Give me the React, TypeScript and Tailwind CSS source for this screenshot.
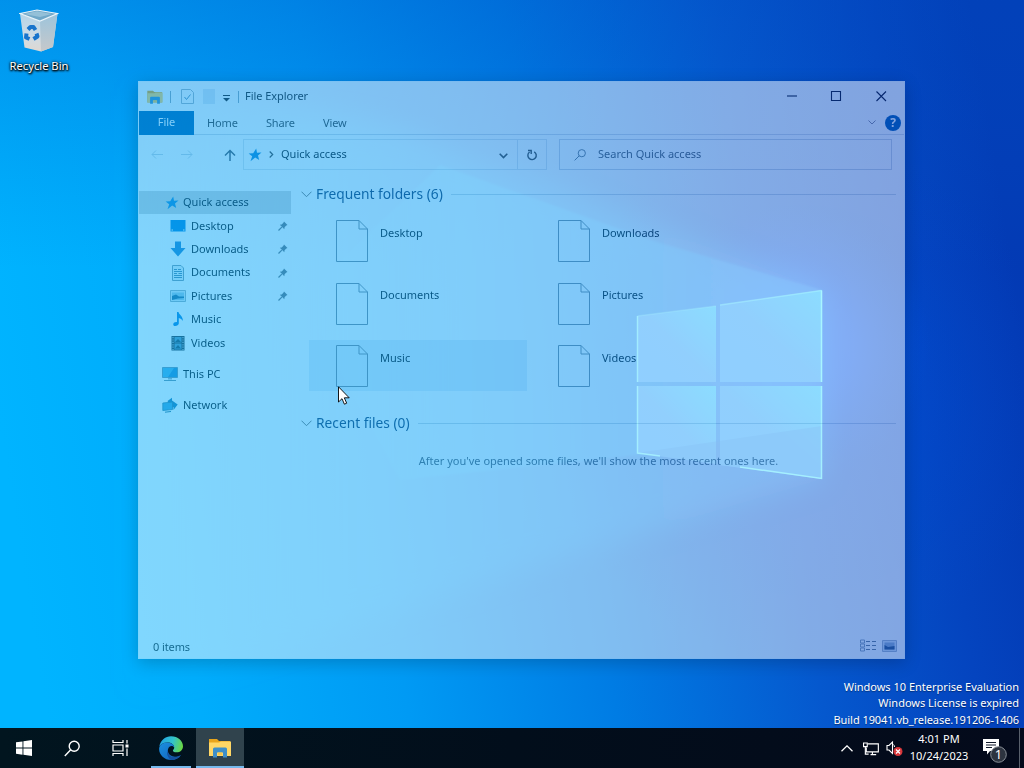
import React from "react";

const Wallpaper = () => (
  <svg className="absolute inset-0 h-[768px] w-[1024px]" viewBox="0 0 1024 768" preserveAspectRatio="none">
    <defs>
      <linearGradient id="base" x1="0" y1="0.56" x2="1" y2="0.44">
        <stop offset="0" stopColor="#00b4ff" />
        <stop offset="0.15" stopColor="#00adfc" />
        <stop offset="0.35" stopColor="#009af4" />
        <stop offset="0.55" stopColor="#007ce4" />
        <stop offset="0.75" stopColor="#0558ce" />
        <stop offset="0.9" stopColor="#0444bf" />
        <stop offset="1" stopColor="#033ab4" />
      </linearGradient>
      <linearGradient id="topShade" x1="0" y1="0" x2="0" y2="1">
        <stop offset="0" stopColor="#0050c4" stopOpacity="0.32" />
        <stop offset="0.35" stopColor="#0060d0" stopOpacity="0" />
      </linearGradient>
      <linearGradient id="beam" x1="0" y1="0" x2="1" y2="0">
        <stop offset="0" stopColor="#00b4ff" stopOpacity="0" />
        <stop offset="0.3" stopColor="#00aeff" stopOpacity="0.7" />
        <stop offset="1" stopColor="#0c94ff" stopOpacity="0.85" />
      </linearGradient>
      <radialGradient id="glow" gradientUnits="userSpaceOnUse" cx="790" cy="345" r="140">
        <stop offset="0" stopColor="#0a68ff" stopOpacity="0.95" />
        <stop offset="0.45" stopColor="#0660ff" stopOpacity="0.55" />
        <stop offset="1" stopColor="#0456e0" stopOpacity="0" />
      </radialGradient>
      <radialGradient id="rightGlow" gradientUnits="userSpaceOnUse" cx="800" cy="400" r="260">
        <stop offset="0" stopColor="#0055e6" stopOpacity="0.5" />
        <stop offset="1" stopColor="#0048d0" stopOpacity="0" />
      </radialGradient>
      <linearGradient id="pane" x1="0" y1="1" x2="1" y2="0">
        <stop offset="0" stopColor="#20a0ff" />
        <stop offset="0.5" stopColor="#22a0fc" />
        <stop offset="1" stopColor="#18baff" />
      </linearGradient>
      <filter id="soft" x="-20%" y="-20%" width="140%" height="140%">
        <feGaussianBlur stdDeviation="14" />
      </filter>
      <filter id="fine">
        <feGaussianBlur stdDeviation="1.2" />
      </filter>
    </defs>
    <rect width="1024" height="768" fill="url(#base)" />
    <rect width="1024" height="768" fill="url(#topShade)" />
    <rect width="1024" height="768" fill="url(#rightGlow)" />
    <rect width="1024" height="768" fill="url(#glow)" />
    <path d="M822 290 L400 130 L120 80 L120 700 L520 570 L822 479Z" fill="url(#beam)" opacity="0.5" filter="url(#soft)" />
    <path d="M822 290 L660 243 L440 165 L300 300 L400 480 L637 455 L822 425Z" fill="url(#beam)" opacity="0.45" filter="url(#fine)" />
    <g fill="url(#pane)">
      <path d="M637 316 L716 306 V382 H637Z" />
      <path d="M720 305 L822 290 V382 H720Z" />
      <path d="M637 386 H716 V464 L637 453Z" />
      <path d="M720 386 H822 V479 L720 465Z" />
    </g>
    <path d="M637 453 L822 426 V479Z" fill="#1488ee" opacity="0.45" />
    <g fill="none" stroke="#52ecff" strokeWidth="1.500">
      <path d="M637.500 382 V316" opacity="0.75" />
      <path d="M637.500 316 L716 306" opacity="0.25" />
      <path d="M720 305 L821.500 290.500" opacity="0.5" />
      <path d="M821.500 290.500 V382" />
      <path d="M637.500 386 V453 L660 456" opacity="0.8" />
      <path d="M821.500 386 V478.500 L740 467" opacity="0.85" />
    </g>
  </svg>
);

const Pin = () => (
  <svg className="h-[10px] w-[10px]" viewBox="0 0 10 10">
    <path d="M6 0.500 L9.500 4 L8.300 4.600 L6.600 6.300 L6.300 8.200 L1.800 3.700 L3.700 3.400 L5.400 1.700Z" fill="#6c7680" />
    <path d="M3.800 6.200 L0.500 9.500" stroke="#6c7680" strokeWidth="1.200" />
  </svg>
);

const Star = () => (
  <svg className="h-[14px] w-[14px]" viewBox="0 0 14 14">
    <path d="M8.200 0.500 L9 4.700 L13.500 4.600 L10 7.400 L11.200 12 L7.200 9.400 L2.500 13.200 L4.200 8.300 L0.600 5.400 L5.200 5.200Z" fill="#1a8ad6" />
  </svg>
);

const DesktopIcon = () => (
  <svg className="h-4 w-4" viewBox="0 0 16 16">
    <path d="M0.500 2 H15.500 V13.500 H0.500Z" fill="#0a86dc" />
    <path d="M1.500 12 H3 M13 12 H14.500" stroke="#fff" strokeWidth="1" />
  </svg>
);
const DownloadIcon = () => (
  <svg className="h-4 w-4" viewBox="0 0 16 16">
    <path d="M5 0.500 H11 V7 H15.500 L8 15.500 L0.500 7 H5Z" fill="#2a86cf" />
  </svg>
);
const DocumentIcon = () => (
  <svg className="h-4 w-4" viewBox="0 0 16 16" fill="none" stroke="#7f9aac">
    <path d="M2.500 0.500 H11 L13.500 3 V15.500 H2.500Z" fill="#e8f2f8" />
    <path d="M4 4.500 H7 M8 4.500 H11 M4 6.500 H12 M4 8.500 H7 M8.500 8.500 H12 M4 10.500 H12 M4 12.500 H12" stroke="#5488a8" />
  </svg>
);
const PictureIcon = () => (
  <svg className="h-4 w-4" viewBox="0 0 16 16">
    <path d="M0.500 2.500 H15.500 V13.500 H0.500Z" fill="#dceaf2" stroke="#98aebb" />
    <path d="M2 4.500 H14 V12 H2Z" fill="#9cc8e0" />
    <path d="M2 12 V8 L6 6.500 L9 8.500 H14 V10 L8 10.500 L2 12Z" fill="#2b6c96" />
  </svg>
);
const MusicIcon = () => (
  <svg className="h-4 w-4" viewBox="0 0 16 16">
    <path d="M7 1 H8.500 C9 4 13.300 5 12.800 10 C12 8.500 10.500 7.300 8.800 7 V12.500 C8.600 14 7 15 5.300 15 C3.800 15 3 14 3.300 12.900 C3.700 11.500 5.500 10.700 7 11.200Z" fill="#1285dc" />
  </svg>
);
const VideoIcon = () => (
  <svg className="h-4 w-4" viewBox="0 0 16 16">
    <path d="M1.500 1 H14.500 V15.500 H1.500Z" fill="#2d3b46" />
    <path d="M4.500 2 H11.500 V7.500 H4.500Z M4.500 8.500 H11.500 V14.500 H4.500Z" fill="#5d98b8" />
    <path d="M3 2 V15 M13 2 V15" stroke="#a8c0cc" strokeWidth="1.200" strokeDasharray="1.200 1.200" />
    <path d="M5 7 L8 4 L11 7Z M5 13.500 L8 10 L11 13.500Z" fill="#264c60" />
  </svg>
);
const PcIcon = () => (
  <svg className="h-4 w-4" viewBox="0 0 16 16">
    <path d="M0.500 1.500 H15.500 V11.500 H0.500Z" fill="#2b8fce" stroke="#6c94ae" />
    <path d="M1 2 H12 L6 11 H1Z" fill="#4fb0e2" />
    <path d="M6 12 H10 V13.500 H6Z" fill="#9ab4c4" />
    <path d="M2 14.500 H14" stroke="#6c94a8" />
  </svg>
);
const NetworkIcon = () => (
  <svg className="h-4 w-4" viewBox="0 0 16 16">
    <path d="M5.500 4 L10 0.800 V3.500 L15.700 7.500 L11.500 13 V10 L9 11Z" fill="#267fb4" />
    <path d="M0.800 6 L10.500 5 V12.500 L0.800 13.500Z" fill="#46a8da" stroke="#3a7ca0" strokeWidth="0.800" />
    <path d="M3 15.200 L9 14.500" stroke="#3a7898" />
  </svg>
);

const FolderIcon = ({ className }: { className: string }) => (
  <svg className={className} viewBox="0 0 22 20">
    <path d="M0 1 H8 L10 3 H21 V18 H0Z" fill="#e8a51c" />
    <path d="M0 4.500 H10 L12 3.500 H22 V18 H0Z" fill="#ffd766" />
    <path d="M4 11 Q4 9.500 5.500 9.500 H16.500 Q18 9.500 18 11 V19.500 H14 V14.500 H8 V19.500 H4Z" fill="#3e8fc8" />
    <path d="M9 14.500 H13 V17 H9Z" fill="#fbc84a" />
  </svg>
);

const Sheet = () => (
  <svg className="h-[43px] w-[33px]" viewBox="0 0 33 43" fill="none" stroke="#7c8a98" strokeWidth="1">
    <path d="M0.500 0.500 H23 L31.500 9 V41.500 H0.500Z" />
    <path d="M23 0.500 V9 H31.500" />
  </svg>
);

const nav = [
  { name: "Desktop", icon: <DesktopIcon />, pinned: true },
  { name: "Downloads", icon: <DownloadIcon />, pinned: true },
  { name: "Documents", icon: <DocumentIcon />, pinned: true },
  { name: "Pictures", icon: <PictureIcon />, pinned: true },
  { name: "Music", icon: <MusicIcon />, pinned: false },
  { name: "Videos", icon: <VideoIcon />, pinned: false },
];

const folders = ["Desktop", "Downloads", "Documents", "Pictures", "Music", "Videos"];

const GroupHeading = ({ label }: { label: string }) => (
  <div className="flex h-5 items-center">
    <svg className="h-[7px] w-[11px]" viewBox="0 0 11 7" fill="none" stroke="#777">
      <path d="M0.500 0.700 L5.500 5.700 L10.500 0.700" />
    </svg>
    <span className="ml-1 text-[13.750px] leading-5 text-[#1c3c68]">{label}</span>
    <span className="ml-2 h-px grow bg-[#d0d9e3]" />
  </div>
);

const Explorer = () => (
  <div className="absolute left-[138px] top-[81px] flex h-[578px] w-[767px] flex-col border border-[#f4fbff] bg-white text-[#0c1218] opacity-50 shadow-[0_4px_16px_rgba(0,0,0,0.4)]">
    <div className="flex h-[29px] shrink-0 items-center">
      <FolderIcon className="ml-2 h-[14px] w-4" />
      <span className="ml-[7px] h-3 w-px bg-[#90a8b8]" />
      <svg className="ml-[10px] h-[15px] w-[13px]" viewBox="0 0 13 15" fill="none" stroke="#a3b5c2">
        <path d="M0.500 0.500 H9.500 L12.500 3.500 V14.500 H0.500Z" />
        <path d="M3.500 8 L5.500 10.500 L9.500 5.500" stroke="#5c8fb8" />
      </svg>
      <span className="ml-[9px] h-[15px] w-3 bg-[#e2eaf4]" />
      <svg className="ml-[7px] mt-[3px] h-[7px] w-[9px]" viewBox="0 0 9 7">
        <path d="M1 0.500 H8" stroke="#222" />
        <path d="M1 3 H8 L4.500 6.500Z" fill="#222" />
      </svg>
      <span className="ml-[7px] h-3 w-px bg-[#90a8b8]" />
      <span className="ml-[6px] text-[11px] tracking-[-0.05px] text-[#222]">File Explorer</span>
      <svg className="ml-auto mr-[17px] h-[11px] w-[100px]" viewBox="0 0 100 11" fill="none" stroke="#0a0a20" strokeWidth="1.100">
        <path d="M0 5 H10" />
        <path d="M44.500 0.500 H53.500 V9.500 H44.500Z" />
        <path d="M89.500 0.500 L99 10 M99 0.500 L89.500 10" />
      </svg>
    </div>
    <div className="flex h-6 shrink-0 items-center border-b border-[#d4dbe6] text-[11px] text-[#3c3c3c]">
      <span className="flex h-6 w-[55px] items-center justify-center bg-[#0066b4] text-white">File</span>
      <span className="ml-[13px] mt-px tracking-[-0.1px]">Home</span>
      <span className="ml-[28px] mt-px tracking-[-0.1px]">Share</span>
      <span className="ml-[28px] mt-px tracking-[-0.1px]">View</span>
      <svg className="ml-auto h-[5px] w-2" viewBox="0 0 8 5" fill="none" stroke="#889">
        <path d="M0.500 0.500 L4 4 L7.500 0.500" />
      </svg>
      <span className="ml-[9px] mr-[3px] flex h-4 w-4 items-center justify-center rounded-full bg-[#0058ae] text-[12px] font-bold text-white">?</span>
    </div>
    <div className="mt-1 flex h-[31px] shrink-0 items-center">
      <svg className="ml-3 h-3 w-[90px]" viewBox="0 0 90 12" fill="none" stroke="#c8d6e2">
        <path d="M12 5.500 H1 M5 1.500 L1 5.500 L5 9.500 M30 5.500 H41 M37 1.500 L41 5.500 L37 9.500" />
        <path d="M79 12 V1.500 M74 6.500 L79 1.500 L84 6.500" stroke="#4c5a68" strokeWidth="1.500" />
      </svg>
      <div className="ml-[2px] flex h-[31px] w-[275px] items-center border border-[#dbe4ec]">
        <span className="ml-1"><Star /></span>
        <svg className="ml-[7px] h-[7px] w-[5px]" viewBox="0 0 5 7" fill="none" stroke="#444" strokeWidth="1.200">
          <path d="M0.700 0.500 L3.700 3.500 L0.700 6.500" />
        </svg>
        <span className="ml-[7px] text-[11px]">Quick access</span>
        <svg className="ml-auto mr-[9px] mt-[2px] h-[6px] w-[9px]" viewBox="0 0 9 6" fill="none" stroke="#444" strokeWidth="1.600">
          <path d="M0.700 0.700 L4.500 4.500 L8.300 0.700" />
        </svg>
      </div>
      <div className="flex h-[31px] w-[29px] items-center justify-center border border-l-0 border-[#dbe4ec]">
        <svg className="h-3 w-3" viewBox="0 0 12 12" fill="none" stroke="#444" strokeWidth="1.400">
          <path d="M8.200 2.800 A4.200 4.200 0 1 1 3.600 3" />
          <path d="M2 1.500 H5.200 V5" />
        </svg>
      </div>
      <div className="ml-[12px] flex h-[31px] w-[333px] items-center border border-[#ccd5e2]">
        <svg className="ml-[14px] h-3 w-3" viewBox="0 0 12 12" fill="none" stroke="#687888">
          <circle cx="7.800" cy="4.200" r="3.600" />
          <path d="M5.200 6.800 L0.600 11.400" />
        </svg>
        <span className="ml-3 text-[11px] text-[#4c5560]">Search Quick access</span>
      </div>
    </div>
    <div className="flex grow">
      <div className="flex w-[162px] flex-col pt-[21px] text-[11px]">
        <div className="flex h-[23.200px] w-[152px] items-center bg-[#d4d6d9] pl-[26px]">
          <Star />
          <span className="ml-1">Quick access</span>
        </div>
        {nav.map((n) => (
          <div key={n.name} className="flex h-[23.400px] w-[152px] items-center pl-[31px] pr-[3px]">
            {n.icon}
            <span className="ml-[5px] grow">{n.name}</span>
            {n.pinned && <Pin />}
          </div>
        ))}
        <div className="mt-2 flex h-[23.400px] items-center pl-[23px]">
          <PcIcon />
          <span className="ml-[5px]">This PC</span>
        </div>
        <div className="mt-[7.500px] flex h-[23.400px] items-center pl-[23px]">
          <NetworkIcon />
          <span className="ml-[5px]">Network</span>
        </div>
      </div>
      <div className="flex grow flex-col pr-2 pt-[14px]">
        <GroupHeading label="Frequent folders (6)" />
        <div className="ml-2 mt-[11px] grid grid-cols-[218px_218px] gap-x-[4px] gap-y-[11.500px]">
          {folders.map((f) => (
            <div
              key={f}
              className={f === "Music" ? "flex h-[51px] items-start bg-[#e6f0f9] pl-[27px] pt-[5px]" : "flex h-[51px] items-start pl-[27px] pt-[5px]"}
            >
              <Sheet />
              <span className="ml-[11px] mt-[4.500px] text-[11px] leading-4">{f}</span>
            </div>
          ))}
        </div>
        <div className="mt-[22px]">
          <GroupHeading label="Recent files (0)" />
        </div>
        <p className="mt-5 text-center text-[11px] leading-4 text-[#5c6470]">After you've opened some files, we'll show the most recent ones here.</p>
      </div>
    </div>
    <div className="flex h-[23px] shrink-0 items-center pl-[14px] pr-[7px] text-[11px] text-[#2a2a2a]">
      <span className="mt-px grow tracking-[-0.1px]">0 items</span>
      <svg className="mb-[2px] h-[13px] w-4" viewBox="0 0 16 13" fill="none" stroke="#8c9cb0">
        <path d="M0.500 1 H4.500 V4 H0.500Z M0.500 5 H4.500 V8 H0.500Z M0.500 9 H4.500 V12 H0.500Z" />
        <path d="M6 2.500 H10 M12 2.500 H16 M6 6.500 H10 M12 6.500 H16 M6 10.500 H10 M12 10.500 H16" stroke="#68788c" />
      </svg>
      <svg className="mb-[2px] ml-[6px] h-3 w-[15px]" viewBox="0 0 15 12">
        <path d="M0.500 0.500 H14.500 V11.500 H0.500Z" fill="#d4deec" stroke="#a4b2c6" />
        <path d="M2.500 2.500 H12.500 V9.500 H2.500Z" fill="#90a8c8" />
        <path d="M2.500 9.500 V5 L6 7 L12.500 6 V9.500Z" fill="#30507c" />
      </svg>
    </div>
  </div>
);

const RecycleBin = () => (
  <div className="absolute left-[1px] top-[8px] flex w-[76px] flex-col items-center">
    <svg className="h-[46px] w-10" viewBox="0 0 40 46">
      <defs>
        <linearGradient id="bin" x1="0" y1="0" x2="0" y2="1">
          <stop offset="0" stopColor="#b4d4e8" />
          <stop offset="0.600" stopColor="#cfdce5" />
          <stop offset="1" stopColor="#ded8d2" />
        </linearGradient>
        <linearGradient id="binSide" x1="0" y1="0" x2="0" y2="1">
          <stop offset="0" stopColor="#9cc4dc" />
          <stop offset="1" stopColor="#c6c8ca" />
        </linearGradient>
      </defs>
      <path d="M1 5.500 L21 13 L38.500 5.500 L34 39 L22 43.500 L5.500 39.500Z" fill="url(#bin)" />
      <path d="M21 13 L38.500 5.500 L34 39 L22 43.500Z" fill="url(#binSide)" />
      <path d="M1 5.500 L18 2 L38.500 5.500 L21 13Z" fill="#6fa7c8" stroke="#eaf4fa" strokeWidth="1.200" />
      <path d="M5 6 L18 3.300 L33 6 L21 9Z" fill="#94c0d8" />
      <g fill="none" stroke="#1874cc" strokeWidth="4" strokeLinejoin="round">
        <path d="M9 21.500 L11.500 19 H14.500 L16.500 22" />
        <path d="M17.500 25.500 L18.500 28.500 L14.500 31" />
        <path d="M10.500 31 L7 29.500 L7.500 25.500" />
      </g>
    </svg>
    <span className="mt-1 text-[11.200px] leading-4 text-white [text-shadow:0_1px_2px_#000,1px_1px_2px_#000,0_0_3px_#000]">Recycle Bin</span>
  </div>
);

const Taskbar = () => (
  <div className="absolute bottom-0 left-0 flex h-10 w-[1024px] items-stretch bg-linear-to-r from-[#01151f] via-[#020e1b] to-[#040a1b] text-white">
    <div className="flex w-12 items-center justify-center">
      <svg className="h-4 w-4" viewBox="0 0 16 16" fill="#fff">
        <path d="M0 2.300 L6.500 1.400 V7.600 H0Z M7.400 1.300 L16 0 V7.600 H7.400Z M0 8.500 H6.500 V14.700 L0 13.800Z M7.400 8.500 H16 V16 L7.400 14.800Z" />
      </svg>
    </div>
    <div className="flex w-12 items-center justify-center">
      <svg className="h-[17px] w-[17px]" viewBox="0 0 17 17" fill="none" stroke="#fff" strokeWidth="1.400">
        <circle cx="10.200" cy="6.200" r="5" />
        <path d="M6.700 9.700 L0.800 16" />
      </svg>
    </div>
    <div className="flex w-12 items-center justify-center">
      <svg className="h-4 w-[17px]" viewBox="0 0 17 16" fill="none" stroke="#fff" strokeWidth="1.200">
        <path d="M1 0 V2.500 H11 V0 M1 5 H11 V11 H1Z M1 16 V13.500 H11 V16 M15 0 V3.500 M15 8.500 V16" />
        <path d="M13.500 4.500 H16.500 V7.500 H13.500Z" fill="#fff" stroke="none" />
      </svg>
    </div>
    <div className="ml-[7px] flex w-10 flex-col items-center">
      <svg className="mt-2 h-6 w-6" viewBox="0 0 24 24">
        <defs>
          <linearGradient id="edgeTop" x1="0" y1="0.300" x2="1" y2="0.500">
            <stop offset="0" stopColor="#1fa0e4" />
            <stop offset="0.550" stopColor="#32c4cc" />
            <stop offset="1" stopColor="#6ad844" />
          </linearGradient>
          <linearGradient id="edgeLow" x1="0" y1="0" x2="1" y2="1">
            <stop offset="0" stopColor="#1b8fe0" />
            <stop offset="1" stopColor="#1160b8" />
          </linearGradient>
        </defs>
        <path d="M0.300 10.500 C1.500 4 6.500 0.200 12 0.200 C19 0.200 24 5 24 10.200 C24 14 21 16.300 17.700 16.300 C14.800 16.300 13.700 15.300 13.900 14.500 C14.300 13.600 15.200 13.200 15.200 11.600 C15.200 8.600 12.200 6.500 8.500 6.500 C4.500 6.500 1.500 8.400 0.300 10.500Z" fill="url(#edgeTop)" />
        <path d="M0.100 13 C0.100 9 4 6.600 8.200 6.600 C12.500 6.600 15.200 9 15.200 11.600 C14.500 10 12.500 9.500 10.800 10.500 C7.500 12.500 8 20.500 16 20.800 C18.500 20.900 20.500 20 22 19 C20 22.200 16.200 24 12 24 C5.500 24 0.100 19 0.100 13Z" fill="url(#edgeLow)" />
        <path d="M8.500 13 C7.800 18 11.500 21.500 16 21 C18.500 20.900 20.500 20.100 22 19 C20 22.200 16.200 24 12 24 C9 22 7 17.500 8.500 13Z" fill="#1450a0" />
      </svg>
      <span className="mt-auto h-[2px] w-full bg-[#76b9ed]" />
    </div>
    <div className="ml-[5px] flex w-12 flex-col items-center bg-[#30434d]">
      <FolderIcon className="mt-[10px] h-5 w-[22px]" />
      <span className="mt-auto h-[2px] w-full bg-[#76b9ed]" />
    </div>
    <div className="ml-auto flex items-center">
      <svg className="h-[7px] w-3" viewBox="0 0 12 7" fill="none" stroke="#fff" strokeWidth="1.300">
        <path d="M0.500 6.300 L6 0.900 L11.500 6.300" />
      </svg>
      <svg className="ml-[10px] mt-px h-[14px] w-[16px]" viewBox="0 0 17 14" fill="none" stroke="#fff" strokeWidth="1.200">
        <path d="M5 1.500 H16.300 V10 H3.500 V5.500 M8 13 H14 M10 10 V13" />
        <path d="M0.600 0.600 H4.500 V4.500 H0.600Z M2.500 4.500 V12.500 H6" />
      </svg>
      <svg className="ml-[7px] h-4 w-[17px]" viewBox="0 0 17 16" fill="none">
        <path d="M1 5.500 H3 L6.500 2 V13.500 L3 10 H1Z" stroke="#fff" strokeWidth="1.100" />
        <path d="M7.500 4.500 Q8.500 5.500 8.500 7" stroke="#fff" />
        <circle cx="12" cy="11.500" r="4.500" fill="#d8363a" />
        <path d="M10 9.500 L14 13.500 M14 9.500 L10 13.500" stroke="#fff" strokeWidth="1.200" />
      </svg>
      <div className="-mt-[2px] ml-[6px] flex w-[60px] flex-col items-center text-[11px] leading-[17.500px]">
        <span>4:01 PM</span>
        <span>10/24/2023</span>
      </div>
      <svg className="ml-[14px] mt-[5px] h-6 w-6" viewBox="0 0 24 24">
        <path d="M0 0 H16 V12 H7 L4 15.500 V12 H0Z" fill="#fff" />
        <path d="M3 3.500 H13 M3 6 H13 M3 8.500 H9" stroke="#10182a" />
        <circle cx="15.500" cy="15.500" r="7.800" fill="#2d3440" stroke="#8a9098" />
        <text x="15.500" y="20.300" textAnchor="middle" fontSize="13" fill="#fff">1</text>
      </svg>
      <span className="ml-[12px] mr-[4px] h-10 w-px bg-[#59606c]" />
    </div>
  </div>
);

export default function App() {
  return (
    <div className="relative h-[768px] w-[1024px] overflow-hidden bg-[#0078d7] font-['Noto_Sans','Open_Sans',sans-serif]">
      <Wallpaper />
      <RecycleBin />
      <Explorer />
      <svg className="absolute left-[338px] top-[386px] h-[19px] w-3" viewBox="0 0 12 19">
        <path d="M0.500 0.800 V16 L4 12.700 L6.400 18.200 L8.700 17.200 L6.300 11.800 H11.200Z" fill="#fff" stroke="#000" strokeWidth="0.900" />
      </svg>
      <div className="absolute right-[5px] top-[679px] flex flex-col items-end text-[11px] leading-[16.400px] text-white [text-shadow:0_1px_1px_rgba(0,0,0,0.4)]">
        <span>Windows 10 Enterprise Evaluation</span>
        <span>Windows License is expired</span>
        <span className="tracking-[-0.06px]">Build 19041.vb_release.191206-1406</span>
      </div>
      <Taskbar />
    </div>
  );
}
